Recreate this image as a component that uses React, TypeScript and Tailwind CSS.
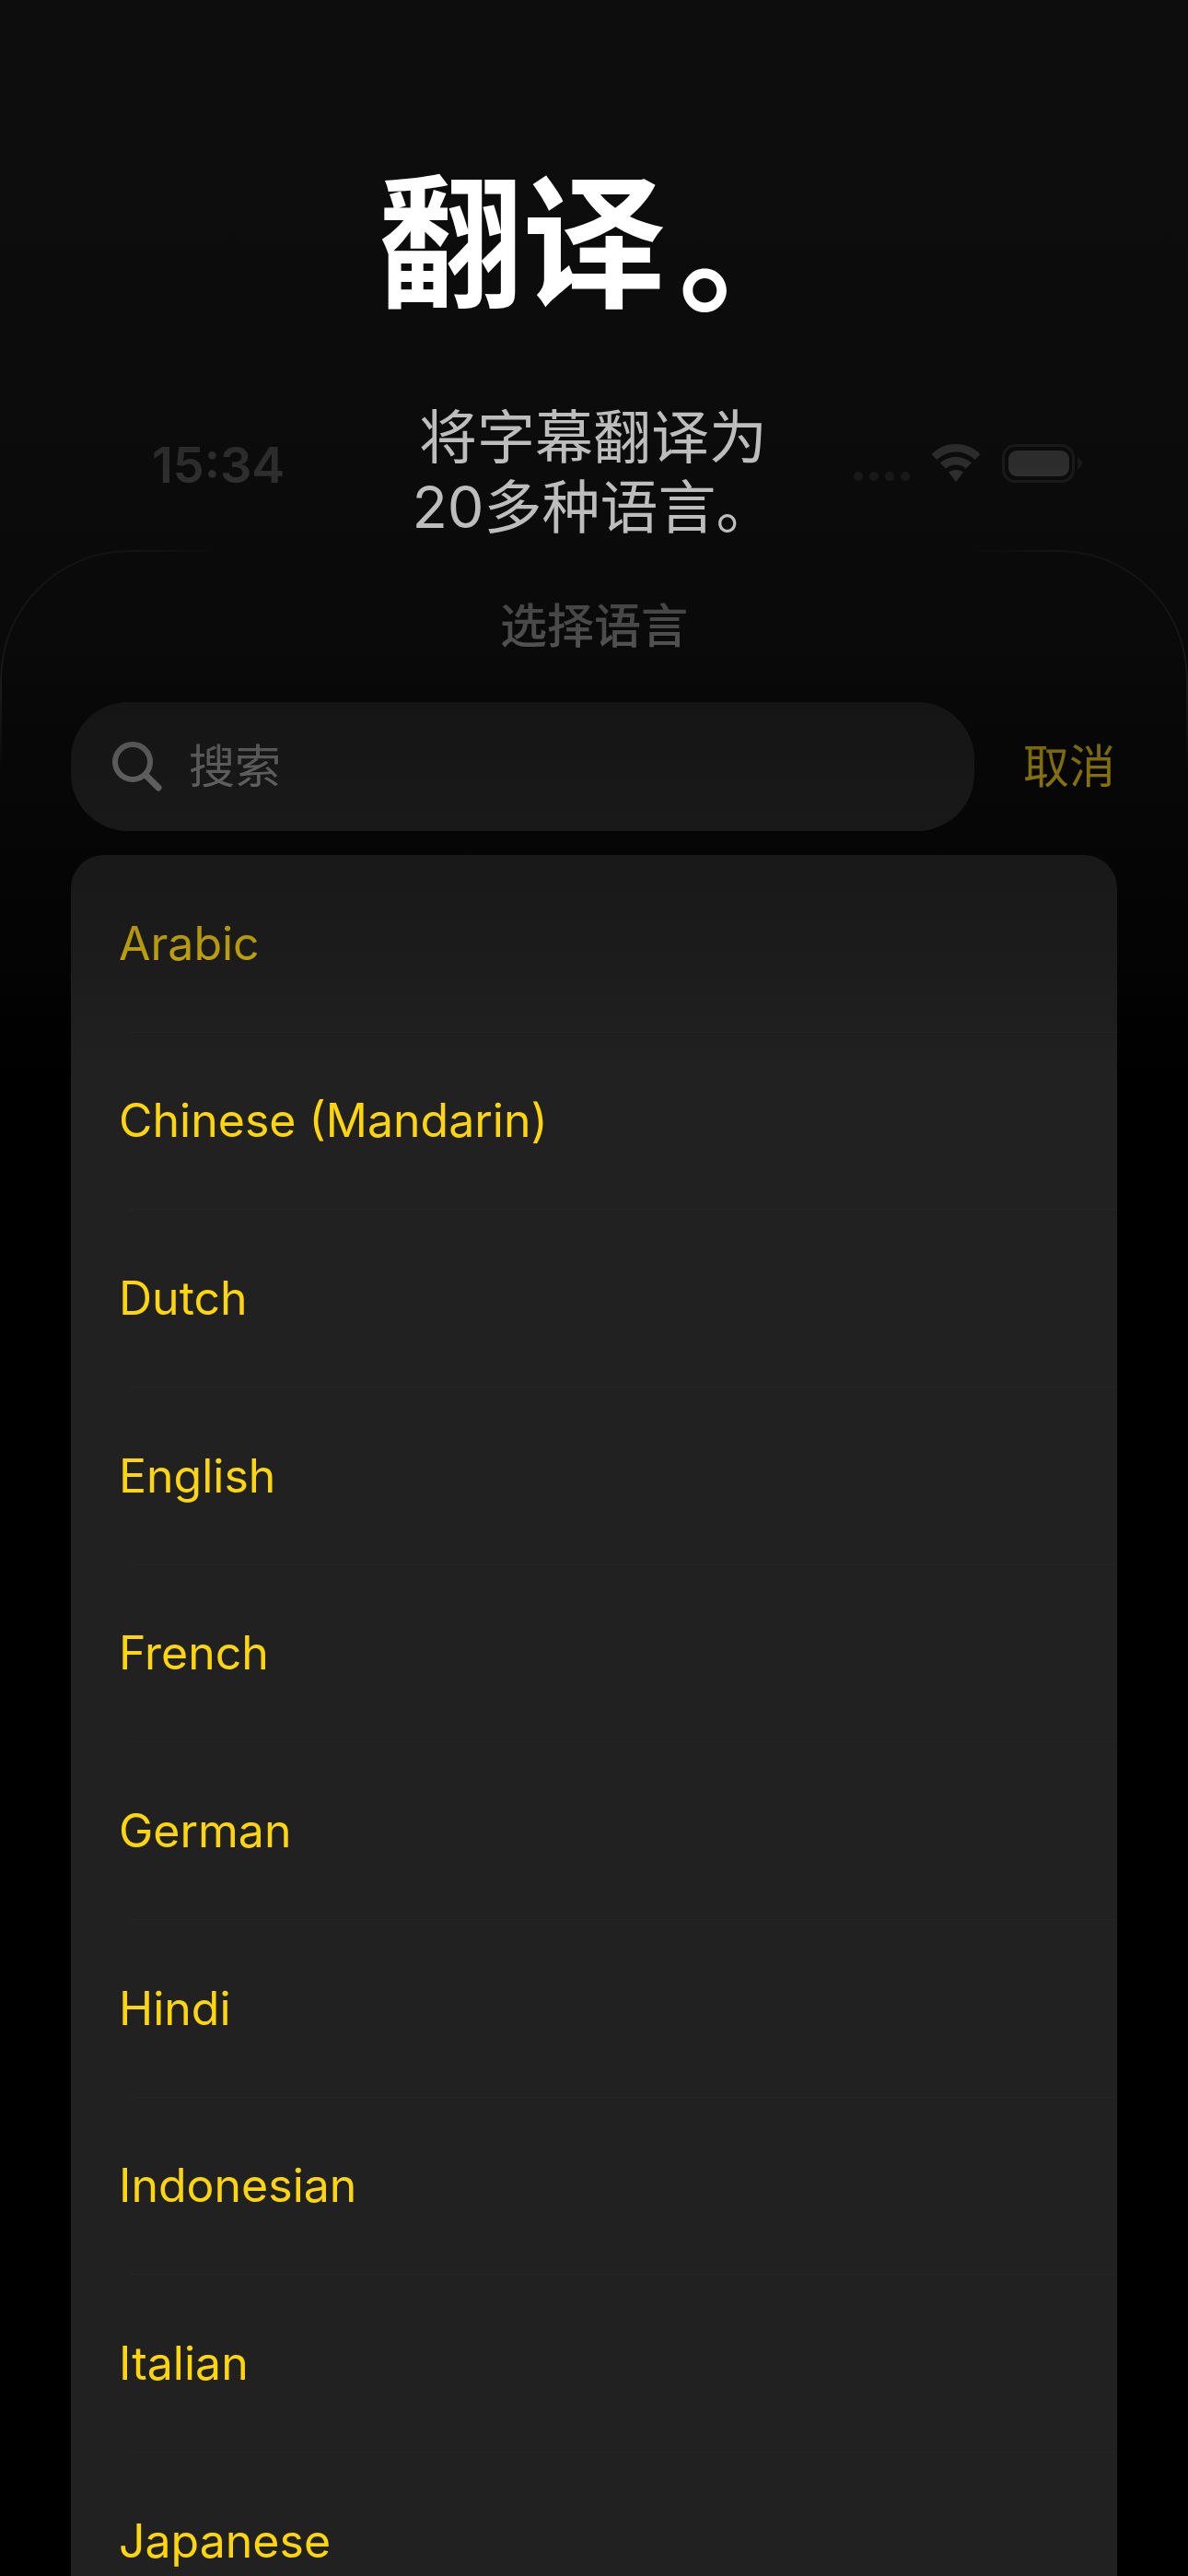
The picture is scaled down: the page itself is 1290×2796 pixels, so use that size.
const rows = ["Arabic","Chinese (Mandarin)","Dutch","English","French","German","Hindi","Indonesian","Italian","Japanese"];
const cjk = { fontFamily: '"Inter","Noto Sans CJK SC",sans-serif' };

export default function App() {
  return (
    <div style={cjk} className="relative h-[2796px] w-[1290px] overflow-hidden bg-black">
      <div className="flex h-[597px] items-start justify-between pl-[165px] pr-[114px] pt-[474px]">
        <span className="text-[54px] font-semibold leading-[62px] text-white">15:34</span>
        <div className="flex items-start gap-[23px] pt-[8px]">
          <div className="flex gap-[7px] pt-[30px]">
            {[0,1,2,3].map(i => <span key={i} className="h-[10px] w-[10px] rounded-full bg-[#646464]" />)}
          </div>
          <svg width="54" height="42" viewBox="0 0 54 42" className="text-white">
            <path fill="currentColor" d="M27 0C16.500 0 7.500 4 .5 11l6 6C12 11.500 19 8.500 27 8.500S42 11.500 47.500 17l6-6C46.500 4 37.500 0 27 0Z" />
            <path fill="currentColor" d="M27 14c-6.500 0-12.500 2.500-17 6.500l6 6C19 24 22.800 22.500 27 22.500S35 24 38 26.500l6-6C39.500 16.500 33.500 14 27 14Z" />
            <path fill="currentColor" d="M27 28c-3 0-5.700 1-7.800 2.800L27 41l7.800-10.200C32.700 29 30 28 27 28Z" />
          </svg>
          <svg width="88" height="42" viewBox="0 0 88 42">
            <rect x="1.500" y="1.500" width="76" height="39" rx="13" fill="none" stroke="#6e6e6e" strokeWidth="3" />
            <rect x="7" y="7" width="66" height="28" rx="9" fill="white" />
            <path d="M82 15c3 1 5 3 5 6s-2 5-5 6Z" fill="#6e6e6e" />
          </svg>
        </div>
      </div>

      <div className="relative h-[2199px] bg-black">
        <div className="absolute inset-0 rounded-t-[140px] border-x-2 border-t-2 border-[#303030] [mask-image:radial-gradient(circle_at_0_0,black_0,black_150px,transparent_240px),radial-gradient(circle_at_100%_0,black_0,black_150px,transparent_240px)]" />
        <h2 className="relative pt-[51px] text-center text-[51px] font-medium leading-[64px] text-white">选择语言</h2>
        <div className="relative mt-[50px] flex items-center pl-[77px] pr-[79px]">
          <div className="flex h-[140px] w-[981px] items-center rounded-[62px] bg-[#222222] pl-[45px]">
            <svg width="54" height="54" viewBox="0 0 54 54" fill="none" stroke="#b0b0b0" strokeWidth="6" strokeLinecap="round">
              <circle cx="22" cy="22" r="19" />
              <path d="M36 36 50 50" strokeWidth="7" />
            </svg>
            <span className="ml-[29px] text-[50px] leading-[60px] text-[#b0b0b0]">搜索</span>
          </div>
          <span className="ml-auto text-[50px] leading-[60px] text-[#ffd60a]">取消</span>
        </div>
        <div className="relative mx-[77px] mt-[26px] overflow-hidden rounded-[36px] bg-[#212121]">
          {rows.map(r => (
            <div key={r} className="ml-[64px] flex h-[192.670px] items-center border-b border-[#262626] text-[50px] font-normal leading-[64px] text-[#ffd60a]">
              <span className="-ml-[12px]">{r}</span>
            </div>
          ))}
        </div>
      </div>

      <div className="absolute inset-x-0 top-0 h-[1180px] bg-[linear-gradient(to_bottom,rgba(13,13,13,1)_0px,rgba(13,13,13,0.9)_400px,rgba(13,13,13,0.87)_505px,rgba(13,13,13,0.75)_680px,rgba(13,13,13,0.52)_832px,rgba(13,13,13,0.3)_1025px,rgba(13,13,13,0)_1170px)]" />

      <div className="absolute inset-x-0 top-[165px] text-center">
        <h1 className="text-[156px] font-bold leading-[200px] text-white">翻译<span className="ml-[14px] inline-block w-[142px] translate-y-[6px] text-left text-[146px] leading-none">。</span></h1>
        <p className="mt-[71px] pr-[2px] text-[63px] leading-[76px] text-[#bdbdbd]">将字幕翻译为<br />20多种语言。</p>
      </div>
    </div>
  );
}
